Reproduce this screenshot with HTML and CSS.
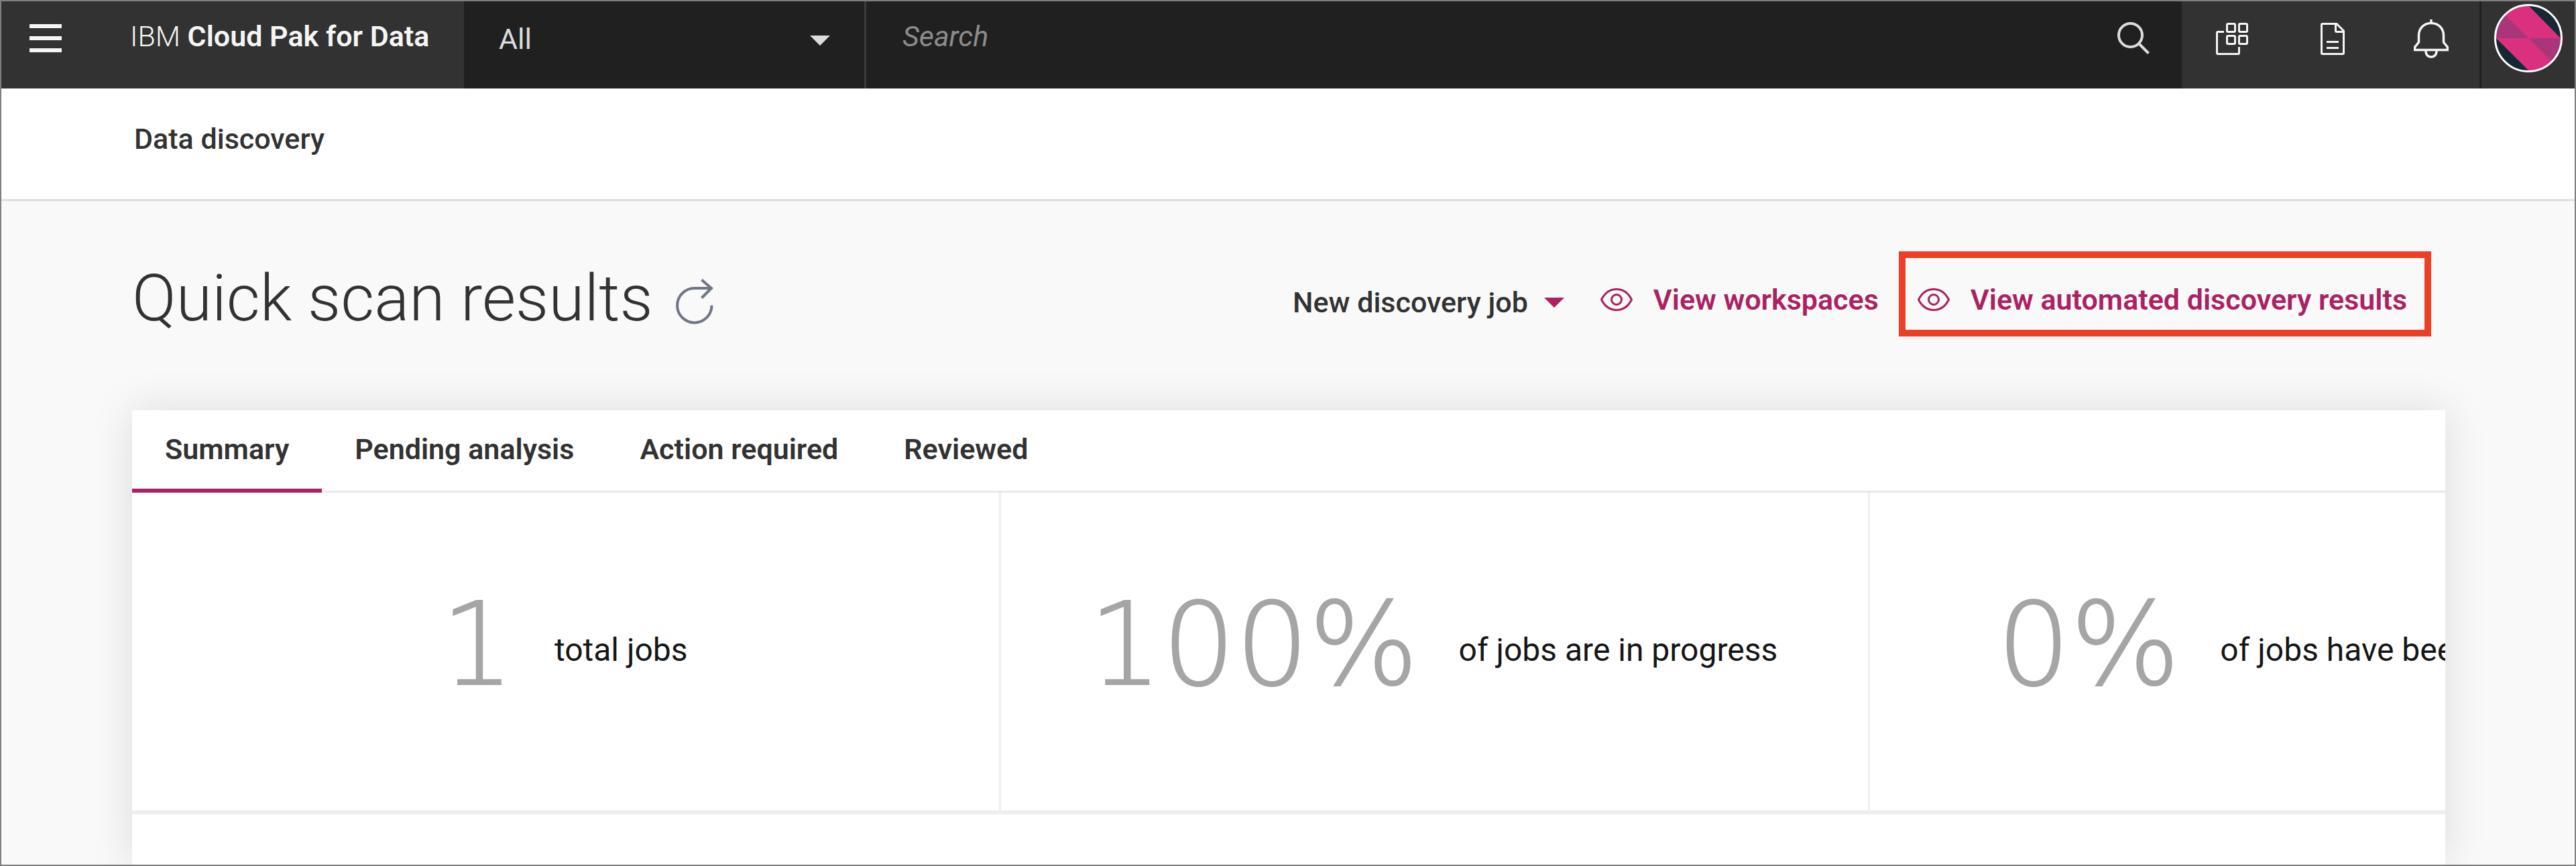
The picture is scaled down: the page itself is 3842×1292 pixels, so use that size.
FILE: index.html
```html
<!DOCTYPE html>
<html lang="en">
<head>
<meta charset="utf-8">
<meta name="viewport" content="width=device-width, initial-scale=1">
<title>Data discovery - IBM Cloud Pak for Data</title>
<link rel="stylesheet" href="styles.css">
</head>
<body>
<header class="topbar">
  <div class="brand">
    <button class="icon-button" type="button" aria-label="Open menu">
      <svg width="48" height="42" viewBox="0 0 48 42" fill="currentColor"><path d="M0 0h48v6H0zM0 18h48v6H0zM0 36h48v6H0z"/></svg>
    </button>
    <a class="brand-name" href="#">IBM <b>Cloud Pak for Data</b></a>
  </div>
  <div class="scope">
    <select class="scope-select" aria-label="Search scope"><option>All</option></select>
    <svg class="scope-caret" width="30" height="15" viewBox="0 0 30 15" fill="currentColor"><path d="M0 0h30L15 15z"/></svg>
  </div>
  <div class="search">
    <input class="search-input" type="text" placeholder="Search" aria-label="Search">
    <button class="icon-button search-button" type="button" aria-label="Submit search">
      <svg width="48" height="48" viewBox="0 0 48 48" fill="none" stroke="currentColor" stroke-width="4"><circle cx="19.500" cy="19.500" r="17.500"/><path d="M32 32l14.500 14.500"/></svg>
    </button>
  </div>
  <nav class="tools" aria-label="Tools">
    <button class="icon-button" type="button" aria-label="Services">
      <svg width="48" height="48" viewBox="0 0 48 48" fill="none" stroke="currentColor" stroke-width="3"><rect x="16.500" y="1.500" width="12" height="12" rx="1.500"/><rect x="34.500" y="1.500" width="12" height="12" rx="1.500"/><rect x="16.500" y="19.500" width="12" height="12" rx="1.500"/><rect x="34.500" y="19.500" width="12" height="12" rx="1.500"/><path d="M12 13.500H3q-1.500 0-1.500 1.500v30q0 1.500 1.500 1.500h30q1.500 0 1.500-1.500v-9"/></svg>
    </button>
    <button class="icon-button" type="button" aria-label="Documentation">
      <svg width="36" height="48" viewBox="0 0 36 48" fill="none" stroke="currentColor" stroke-width="3"><path d="M3 1.500h21L34.500 12v33q0 1.500-1.500 1.500H3q-1.500 0-1.500-1.500V3q0-1.500 1.500-1.500z"/><path d="M22.500 1.500V12q0 1.500 1.500 1.500h10.500M9 28.500h18M9 37.500h18"/></svg>
    </button>
    <button class="icon-button" type="button" aria-label="Notifications">
      <svg width="52" height="58" viewBox="0 0 52 58" fill="none" stroke="currentColor" stroke-width="3.500"><path d="M26 0v5M26 5.500C14.500 5.500 7.500 14 7.500 24v10L1.500 41.500v4h49v-4L44.500 34V24C44.500 14 37.500 5.500 26 5.500z"/><path d="M18 46v2a8 8 0 0 0 16 0v-2"/></svg>
    </button>
  </nav>
  <div class="account">
    <button class="icon-button" type="button" aria-label="Account">
      <svg width="102" height="102" viewBox="0 0 102 102">
        <defs><clipPath id="avatar-clip"><circle cx="51" cy="51" r="49"/></clipPath></defs>
        <g clip-path="url(#avatar-clip)">
          <path fill="#d9317f" d="M0 0h102v102H0z"/>
          <path fill="#a9367a" d="M0 0l51 51H0zM51 51h51v51z"/>
          <path fill="#152934" d="M49 0h53v54zM0 48v54h54z"/>
        </g>
        <circle cx="51" cy="51" r="49.500" fill="none" stroke="#fff" stroke-width="3"/>
      </svg>
    </button>
  </div>
</header>
<div class="breadcrumb">Data discovery</div>
<main class="page">
  <div class="page-head">
    <div class="title">
      <h1 class="title-text">Quick scan results</h1>
      <button class="icon-button refresh" type="button" aria-label="Refresh">
        <svg width="56" height="68" viewBox="0 0 56 68" fill="none" stroke="currentColor" stroke-width="4"><path d="M53.500 39.500A25.700 25.700 0 1 1 27.500 14H53"/><path d="M38.500 1.500L53 14 38.500 28.500"/></svg>
      </button>
    </div>
    <div class="actions">
      <button class="action action-menu" type="button" aria-haspopup="menu">New discovery job
        <svg width="30" height="15" viewBox="0 0 30 15" fill="#aa2262"><path d="M0 0h30L15 15z"/></svg>
      </button>
      <a class="action action-link" href="#">
        <svg width="48" height="34" viewBox="0 0 48 34" fill="none" stroke="currentColor" stroke-width="3"><path d="M1.500 17C6 8 13.500 1.500 24 1.500S42 8 46.500 17C42 26 34.500 32.500 24 32.500S6 26 1.500 17z"/><circle cx="24" cy="17" r="7.500"/></svg>
        View workspaces</a>
      <a class="action action-link action-highlight" href="#">
        <svg width="48" height="34" viewBox="0 0 48 34" fill="none" stroke="currentColor" stroke-width="3"><path d="M1.500 17C6 8 13.500 1.500 24 1.500S42 8 46.500 17C42 26 34.500 32.500 24 32.500S6 26 1.500 17z"/><circle cx="24" cy="17" r="7.500"/></svg>
        View automated discovery results</a>
    </div>
  </div>
  <section class="card">
    <div class="tabs" role="tablist">
      <button class="tab tab-active" type="button" role="tab" aria-selected="true">Summary</button>
      <button class="tab" type="button" role="tab" aria-selected="false">Pending analysis</button>
      <button class="tab" type="button" role="tab" aria-selected="false">Action required</button>
      <button class="tab" type="button" role="tab" aria-selected="false">Reviewed</button>
    </div>
    <div class="stats">
      <div class="stat"><span class="stat-value">1</span><span class="stat-label">total jobs</span></div>
      <div class="stat"><span class="stat-value">100%</span><span class="stat-label">of jobs are in progress</span></div>
      <div class="stat"><span class="stat-value">0%</span><span class="stat-label">of jobs have been reviewed</span></div>
    </div>
  </section>
</main>
</body>
</html>
```
FILE: styles.css
```css
* {
  box-sizing: border-box;
}

body {
  display: flex;
  flex-direction: column;
  min-height: 100vh;
  margin: 0;
  border: 2px solid #7f7f7f;
  background: #f9f9f9;
  color: #323232;
  font-family: Roboto, "Open Sans", sans-serif;
  font-size: 43px;
  line-height: 50px;
}

button,
input,
select {
  margin: 0;
  padding: 0;
  border: 0;
  background: none;
  color: inherit;
  font: inherit;
}

a {
  color: inherit;
  text-decoration: none;
}

svg {
  display: block;
  flex: none;
}

.icon-button {
  display: flex;
  align-items: center;
  justify-content: center;
}

/* Top bar */
.topbar {
  display: flex;
  height: 130px;
  background: #323232;
  color: #f5f5f5;
}

.brand {
  display: flex;
  flex: 0 0 690px;
  align-items: center;
  gap: 102px;
  padding: 0 0 20px 42px;
}

.brand-name {
  padding-bottom: 6px;
  font-weight: 300;
  white-space: nowrap;
}

.brand-name b {
  font-weight: 600;
}

.scope {
  display: grid;
  flex: 0 0 600px;
  align-items: center;
  border-right: 3px solid #3c3c3c;
  background: #202020;
  color: #dcdcdc;
}

.scope-select,
.scope-caret {
  grid-area: 1 / 1;
}

.scope-select {
  width: 100%;
  height: 100%;
  padding: 0 100px 18px 52px;
  appearance: none;
  font-weight: 400;
}

.scope-caret {
  justify-self: end;
  margin: 0 51px 14px 0;
  pointer-events: none;
}

.search {
  display: flex;
  flex: 1;
  padding: 0 48px 20px 54px;
  background: #202020;
  color: #dcdcdc;
}

.search-input {
  flex: 1;
  min-width: 0;
  padding-bottom: 6px;
  font-style: italic;
}

.search-input::placeholder {
  color: #8c8c8c;
  opacity: 1;
}

.tools {
  display: grid;
  grid-template-columns: 150px 150px 144px;
  padding-bottom: 18px;
}

.account {
  display: flex;
  justify-content: center;
  flex: 0 0 142px;
  padding-bottom: 20px;
  border-left: 3px solid #202020;
}

.breadcrumb {
  padding: 50px 198px 65px;
  border-bottom: 3px solid #dfdfdf;
  background: #fff;
  font-weight: 500;
}

/* Page */
.page {
  display: flex;
  flex: 1;
  flex-direction: column;
  padding: 0 193px 0 195px;
  overflow: hidden;
}

.page-head {
  display: flex;
  justify-content: space-between;
  padding: 75px 21px 97px 0;
}

.title {
  display: flex;
  align-items: center;
  gap: 34px;
  height: 140px;
}

.title-text {
  margin: 0;
  font-size: 97px;
  font-weight: 300;
  line-height: 112px;
}

.refresh {
  padding-top: 10px;
  color: #6f7587;
}

.actions {
  display: flex;
  align-items: flex-start;
}

.action {
  display: flex;
  align-items: center;
  padding: 37px 0 20px;
  border: 10px solid transparent;
  font-weight: 600;
  white-space: nowrap;
}

.action-menu {
  gap: 24px;
  padding: 41px 0 16px;
  font-weight: 500;
}

.action-link {
  gap: 31px;
  margin-left: 20px;
  color: #aa2262;
}

.action-menu + .action-link {
  margin-left: 34px;
}

.action-highlight {
  padding-right: 26px;
  padding-left: 18px;
  border-color: #ec4026;
}

/* Card */
.card {
  flex: 1;
  background: #fff;
  box-shadow: 0 0 60px rgba(0, 0, 0, 0.12);
}

.tabs {
  display: flex;
  border-bottom: 3px solid #e8e8e8;
}

.tab {
  height: 123px;
  margin-bottom: -3px;
  padding: 0 49px 2px;
  border-bottom: 6px solid transparent;
  font-weight: 600;
}

.tab-active {
  border-color: #aa2262;
}

.stats {
  display: flex;
  overflow: hidden;
  border-bottom: 6px solid #eee;
}

.stat {
  display: flex;
  flex: 1 0 1296px;
  align-items: center;
  justify-content: center;
  gap: 60px;
  height: 474px;
  padding: 0 4px 4px 0;
  border-right: 3px solid #eee;
  white-space: nowrap;
}

.stat-value {
  padding-bottom: 16px;
  color: #a5a5a5;
  font-family: "DejaVu Sans Light", "DejaVu Sans", sans-serif;
  font-size: 172px;
  font-weight: 200;
  line-height: 200px;
  -webkit-text-stroke: 2px #a5a5a5;
}

.stat-label {
  color: #161616;
  font-size: 48px;
  line-height: 60px;
}
```
